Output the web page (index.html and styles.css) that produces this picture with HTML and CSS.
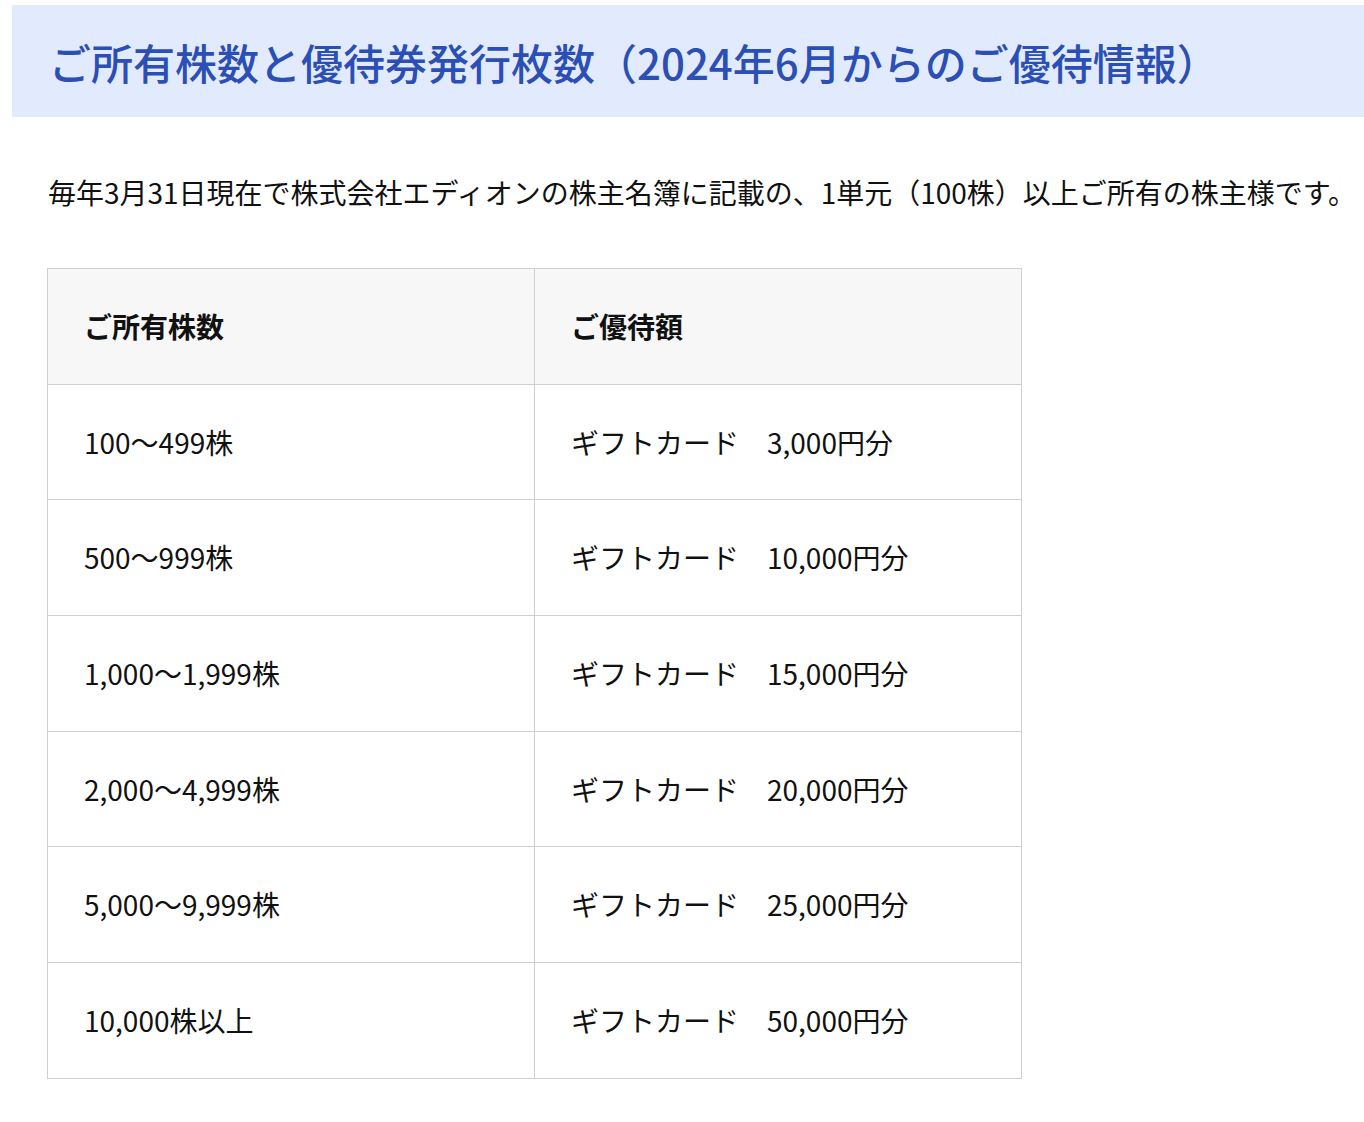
FILE: index.html
```html
<!DOCTYPE html>
<html lang="ja">
<head>
<meta charset="utf-8">
<link rel="stylesheet" href="styles.css">
</head>
<body>
<div class="page">
  <h2 class="title">ご所有株数と優待券発行枚数（2024年6月からのご優待情報）</h2>
  <div class="content">
    <p class="lead">毎年3月31日現在で株式会社エディオンの株主名簿に記載の、1単元（100株）以上ご所有の株主様です。</p>
    <table class="tbl">
      <thead>
        <tr><th>ご所有株数</th><th>ご優待額</th></tr>
      </thead>
      <tbody>
        <tr><td>100～499株</td><td>ギフトカード　3,000円分</td></tr>
        <tr><td>500～999株</td><td>ギフトカード　10,000円分</td></tr>
        <tr><td>1,000～1,999株</td><td>ギフトカード　15,000円分</td></tr>
        <tr><td>2,000～4,999株</td><td>ギフトカード　20,000円分</td></tr>
        <tr><td>5,000～9,999株</td><td>ギフトカード　25,000円分</td></tr>
        <tr><td>10,000株以上</td><td>ギフトカード　50,000円分</td></tr>
      </tbody>
    </table>
  </div>
</div>
</body>
</html>
```
FILE: styles.css
```css
html, body {
  margin: 0;
  padding: 0;
  background: #fff;
}
body {
  font-family: "Noto Sans CJK JP", "Noto Sans", sans-serif;
  color: #111;
}
.page {
  padding: 5px 0 0 12px;
}
.title {
  margin: 0;
  background: #e2ebfd;
  color: #2b4fb5;
  font-size: 42px;
  font-weight: 500;
  line-height: 60px;
  padding: 27px 0 25px 37px;
}
.content {
  padding-left: 35px;
}
.lead {
  margin: 0;
  padding: 55px 0 0 1px;
  font-size: 28px;
  line-height: 40px;
}
.tbl {
  margin-top: 56px;
  border-collapse: collapse;
  width: 975px;
  table-layout: fixed;
  font-size: 28px;
}
.tbl th, .tbl td {
  border: 1px solid #cfcfcf;
  padding: 38px 36px 37.7px;
  line-height: 39px;
  text-align: left;
  vertical-align: middle;
}
.tbl th {
  background: #f7f7f7;
  font-weight: 700;
}
```
